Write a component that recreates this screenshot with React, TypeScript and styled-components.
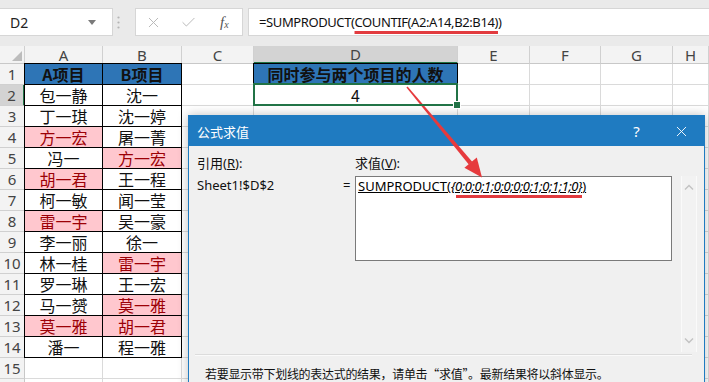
import styled, { createGlobalStyle } from "styled-components"
import { X, Check } from "lucide-react"

const GlobalStyle = createGlobalStyle`
  html, body { margin: 0; padding: 0; }
  body {
    width: 709px;
    height: 382px;
    overflow: hidden;
    background: #fff;
    font-family: "Noto Sans", "Noto Sans CJK SC", sans-serif;
  }
`

type Fill = "blue" | "pink" | undefined
type Entry = { text: string; fill?: Fill }

const pairs: [Entry, Entry][] = [
  [{ text: "A项目", fill: "blue" }, { text: "B项目", fill: "blue" }],
  [{ text: "包一静" }, { text: "沈一" }],
  [{ text: "丁一琪" }, { text: "沈一婷" }],
  [{ text: "方一宏", fill: "pink" }, { text: "屠一菁" }],
  [{ text: "冯一" }, { text: "方一宏", fill: "pink" }],
  [{ text: "胡一君", fill: "pink" }, { text: "王一程" }],
  [{ text: "柯一敏" }, { text: "闻一莹" }],
  [{ text: "雷一宇", fill: "pink" }, { text: "吴一豪" }],
  [{ text: "李一丽" }, { text: "徐一" }],
  [{ text: "林一桂" }, { text: "雷一宇", fill: "pink" }],
  [{ text: "罗一琳" }, { text: "王一宏" }],
  [{ text: "马一赟" }, { text: "莫一雅", fill: "pink" }],
  [{ text: "莫一雅", fill: "pink" }, { text: "胡一君", fill: "pink" }],
  [{ text: "潘一" }, { text: "程一雅" }],
]

const columns = ["A", "B", "C", "D", "E", "F", "G", "H"]

export default function App() {
  // row 16 is only a sliver at the bottom edge, so its number is left out
  const rows = Array.from({ length: 16 }, (_, i) => i + 1)
  return (
    <Page>
      <GlobalStyle />
      <FormulaBar>
        <NameBox>
          D2
          <svg width="8" height="5" viewBox="0 0 8 5">
            <path d="M0 0h8L4 5z" fill="#7a7a7a" />
          </svg>
        </NameBox>
        <Grip>
          <svg width="3" height="13" viewBox="0 0 3 13">
            <circle cx="1.5" cy="1.5" r="1.1" fill="#b4b4b4" />
            <circle cx="1.5" cy="6.5" r="1.1" fill="#b4b4b4" />
            <circle cx="1.5" cy="11.5" r="1.1" fill="#b4b4b4" />
          </svg>
        </Grip>
        <ToolBox>
          <ToolSlot><X size={17} strokeWidth={1.4} color="#b9b9b9" /></ToolSlot>
          <ToolSlot><Check size={17} strokeWidth={1.4} color="#b9b9b9" /></ToolSlot>
          <ToolSlot><Fx>f<sub>x</sub></Fx></ToolSlot>
        </ToolBox>
        <FormulaInput>
          =SUMPRODUCT(<Marked>COUNTIF(A2:A14,B2:B14)</Marked>)
        </FormulaInput>
      </FormulaBar>

      <Sheet>
        <ColHead $corner>
          <svg width="10" height="10" viewBox="0 0 10 10">
            <path d="M10 0V10H0z" fill="#bcbcbc" />
          </svg>
        </ColHead>
        {columns.map((c) => (
          <ColHead key={c} $selected={c === "D"}>{c}</ColHead>
        ))}
        {rows.map((r) => {
          const pair = pairs[r - 1]
          return [
            <RowHead key={`h${r}`} $selected={r === 2}>{r < 16 ? r : ""}</RowHead>,
            ...columns.map((c) => {
              if (pair && (c === "A" || c === "B")) {
                const e = c === "A" ? pair[0] : pair[1]
                return (
                  <Cell
                    key={c + r}
                    $fill={e.fill}
                    $boxed
                    $bold={r === 1}
                    $edgeLeft={c === "A"}
                    $edgeTop={r === 1}
                  >
                    {e.text}
                  </Cell>
                )
              }
              if (c === "D" && r === 1) {
                return (
                  <Cell key={c + r} $fill="blue" $boxed $bold $edgeLeft $edgeTop>
                    同时参与两个项目的人数
                  </Cell>
                )
              }
              if (c === "D" && r === 2) {
                return (
                  <Cell key={c + r} $selected>
                    4
                    <FillHandle />
                  </Cell>
                )
              }
              return <Cell key={c + r} />
            }),
          ]
        })}
      </Sheet>

      <Dialog>
        <TitleBar>
          <Title>公式求值</Title>
          <TitleButton>?</TitleButton>
          <TitleButton>
            <X size={17} strokeWidth={1.3} color="#fff" />
          </TitleButton>
        </TitleBar>
        <Body>
          <Label>引用(<u>R</u>):</Label>
          <span />
          <Label>求值(<u>V</u>):</Label>
          <span />
          <span />
          <Label>Sheet1!$D$2</Label>
          <Label>=</Label>
          <EvalBox>
            <u>SUMPRODUCT(</u>
            <ArrayPart>{"{0;0;0;1;0;0;0;0;1;0;1;1;0}"}</ArrayPart>
            <u>)</u>
          </EvalBox>
          <span />
          <ScrollTrack>
            <svg width="10" height="6" viewBox="0 0 10 6">
              <path d="M1 5.5L5 1.5l4 4" stroke="#c2c2c2" strokeWidth="1.4" fill="none" />
            </svg>
            <svg width="10" height="6" viewBox="0 0 10 6">
              <path d="M1 0.5L5 4.5l4-4" stroke="#c2c2c2" strokeWidth="1.4" fill="none" />
            </svg>
          </ScrollTrack>
        </Body>
        <Separator />
        <Hint>若要显示带下划线的表达式的结果，请单击“求值”。最新结果将以斜体显示。</Hint>
      </Dialog>

      <Overlay width="709" height="382" viewBox="0 0 709 382">
        <polygon
          points="406.4,87.6 407.6,86.4 472.2,161.8 468.8,164.6"
          fill="#e63a3d"
        />
        <polygon points="482,177.5 464.4,167.8 476.8,157.4" fill="#e63a3d" />
      </Overlay>
    </Page>
  )
}

const Page = styled.div`
  position: relative;
  width: 709px;
  height: 382px;
  overflow: hidden;
  background: #fff;
`

const FormulaBar = styled.div`
  display: flex;
  align-items: flex-start;
  height: 46px;
  box-sizing: border-box;
  padding-top: 8px;
  background: #eaeaea;
`

const NameBox = styled.div`
  display: flex;
  align-items: center;
  justify-content: space-between;
  width: 113px;
  height: 28px;
  box-sizing: border-box;
  padding: 0 16px 0 10px;
  background: #fff;
  border: 1px solid #d6d6d6;
  border-left: none;
  font-size: 14px;
  color: #222;
`

const Grip = styled.div`
  display: flex;
  align-items: center;
  width: 22px;
  height: 28px;
  padding-left: 4px;
  box-sizing: border-box;
`

const ToolBox = styled.div`
  display: flex;
  width: 108px;
  height: 28px;
  box-sizing: border-box;
  background: #fff;
  border: 1px solid #d6d6d6;
`

const ToolSlot = styled.div`
  display: flex;
  align-items: center;
  justify-content: center;
  width: 36px;
`

const Fx = styled.span`
  font-family: "Liberation Serif", serif;
  font-style: italic;
  font-size: 15px;
  color: #555;
  sub {
    font-size: 10px;
    vertical-align: -1px;
  }
`

const FormulaInput = styled.div`
  flex: 1;
  height: 28px;
  margin-left: 5px;
  box-sizing: border-box;
  padding-left: 10px;
  background: #fff;
  border: 1px solid #d6d6d6;
  border-right: none;
  font-size: 13px;
  letter-spacing: -0.4px;
  line-height: 26px;
  color: #111;
  white-space: nowrap;
`

const Marked = styled.span`
  text-decoration: underline #e23b3f 3px;
  text-underline-offset: 4px;
`

const Sheet = styled.div`
  display: grid;
  grid-template-columns: 25px 78px 79px 72px 204px 72px 71px 72px 1fr;
  grid-template-rows: 18px repeat(16, 21px);
`

const ColHead = styled.div<{ $selected?: boolean; $corner?: boolean }>`
  display: flex;
  justify-content: ${(p) => (p.$corner ? "flex-end" : "center")};
  align-items: ${(p) => (p.$corner ? "flex-end" : "center")};
  padding: ${(p) => (p.$corner ? "0 2px 2px 0" : "0")};
  box-sizing: border-box;
  background: ${(p) => (p.$selected ? "#d3d3d3" : "#f3f3f3")};
  border-right: 1px solid #d0d0d0;
  border-bottom: ${(p) => (p.$selected ? "2px solid #217346" : "1px solid #c8c8c8")};
  font-size: 15px;
  line-height: 16px;
  color: #444;
`

const RowHead = styled.div<{ $selected?: boolean }>`
  display: flex;
  align-items: center;
  justify-content: center;
  box-sizing: border-box;
  background: ${(p) => (p.$selected ? "#d3d3d3" : "#f3f3f3")};
  border-right: ${(p) => (p.$selected ? "2px solid #217346" : "1px solid #c8c8c8")};
  border-bottom: 1px solid #d0d0d0;
  font-size: 15px;
  line-height: 18px;
  color: #444;
`

const shadowFor = (left?: boolean, top?: boolean) => {
  const s: string[] = []
  if (left) s.push("-1px 0 0 #000")
  if (top) s.push("0 -1px 0 #000")
  if (left && top) s.push("-1px -1px 0 #000")
  return s.length ? s.join(", ") : "none"
}

const Cell = styled.div<{
  $fill?: Fill
  $boxed?: boolean
  $bold?: boolean
  $edgeLeft?: boolean
  $edgeTop?: boolean
  $selected?: boolean
}>`
  position: ${(p) => (p.$selected ? "relative" : "static")};
  display: flex;
  align-items: center;
  justify-content: center;
  box-sizing: border-box;
  border-right: 1px solid ${(p) => (p.$boxed ? "#000" : "#dadada")};
  border-bottom: 1px solid ${(p) => (p.$boxed ? "#000" : "#dadada")};
  background: ${(p) =>
    p.$fill === "blue" ? "#2e75b6" : p.$fill === "pink" ? "#ffc7ce" : "#fff"};
  color: ${(p) => (p.$fill === "pink" ? "#9c0006" : "#111")};
  font-weight: ${(p) => (p.$bold ? 700 : 400)};
  box-shadow: ${(p) => shadowFor(p.$edgeLeft, p.$edgeTop)};
  font-family: "Noto Sans CJK SC", sans-serif;
  font-size: 16px;
  line-height: 18px;
  white-space: nowrap;

  ${(p) =>
    p.$selected &&
    `
    &::after {
      content: "";
      position: absolute;
      inset: -2px -1px -1px -1px;
      border: 2px solid #217346;
      z-index: 1;
    }
  `}
`

const FillHandle = styled.span`
  position: absolute;
  right: -4px;
  bottom: -4px;
  width: 6px;
  height: 6px;
  background: #217346;
  border: 1px solid #fff;
  z-index: 2;
`

const Dialog = styled.div`
  position: absolute;
  left: 188px;
  top: 115px;
  width: 517px;
  height: 290px;
  box-sizing: border-box;
  border: 1px solid #1f7bc1;
  background: #f0f0f0;
  box-shadow: 0 0 10px rgba(0, 0, 0, 0.25);
  font-family: "Noto Sans", "Noto Sans CJK SC", sans-serif;
`

const TitleBar = styled.div`
  display: flex;
  align-items: center;
  height: 30px;
  padding-left: 8px;
  background: #1f7bc1;
  color: #fff;
`

const Title = styled.div`
  flex: 1;
  font-size: 13px;
  font-family: "Noto Sans CJK SC", sans-serif;
`

const TitleButton = styled.div`
  display: flex;
  align-items: center;
  justify-content: center;
  width: 45px;
  height: 30px;
  font-size: 15px;
`

const Body = styled.div`
  display: grid;
  grid-template-columns: 146px 12px 317px 9px 16px;
  grid-template-rows: 18px 176px;
  row-gap: 4px;
  padding: 8px 0 0 8px;
`

const Label = styled.div`
  font-size: 13px;
  line-height: 18px;
  color: #111;
  white-space: nowrap;
`

const EvalBox = styled.div`
  align-self: start;
  height: 85px;
  box-sizing: border-box;
  padding: 1px 2px;
  background: #fff;
  border: 1px solid #7a7a7a;
  font-size: 13px;
  line-height: 16px;
  color: #000;
  white-space: nowrap;
`

const ArrayPart = styled.span`
  position: relative;
  font-style: italic;
  text-decoration: underline;
  letter-spacing: -0.4px;

  &::after {
    content: "";
    position: absolute;
    left: 5px;
    right: 0;
    bottom: -3px;
    height: 3px;
    background: #e23b3f;
  }
`

const ScrollTrack = styled.div`
  display: flex;
  flex-direction: column;
  justify-content: space-between;
  align-items: center;
  padding: 8px 0;
  box-sizing: border-box;
  background: #f2f2f2;
  border-left: 1px solid #fafafa;
  border-right: 1px solid #fafafa;
`

const Separator = styled.div`
  height: 1px;
  margin: 2px 12px 0 6px;
  background: #dcdcdc;
  border-bottom: 1px solid #fafafa;
`

const Hint = styled.div`
  margin-top: 9px;
  padding-left: 16px;
  font-family: "Noto Sans CJK SC", sans-serif;
  font-size: 12px;
  line-height: 17px;
  color: #111;
  letter-spacing: -0.3px;
`

const Overlay = styled.svg`
  position: absolute;
  left: 0;
  top: 0;
  pointer-events: none;
`
